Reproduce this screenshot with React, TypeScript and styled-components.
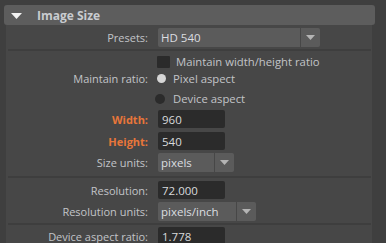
import React from "react";
import styled, { createGlobalStyle } from "styled-components";

const Global = createGlobalStyle`
  html, body { margin: 0; padding: 0; background: #3f3f3f; }
  body { font-family: "Open Sans", "Liberation Sans", sans-serif; }
`;

const Root = styled.div`
  width: 386px;
  height: 243px;
  overflow: hidden;
  background: #3f3f3f;
  padding-top: 5px;
  box-sizing: border-box;
`;

const Header = styled.div`
  margin-left: 4px;
  width: 371px;
  height: 20px;
  background: #5d5d5d;
  border-radius: 3px;
  display: flex;
  align-items: center;
  box-sizing: border-box;
  padding-left: 7px;
`;

const Caret = styled.svg`
  width: 11px;
  height: 6px;
  margin-right: 15px;
  margin-top: 1px;
`;

const HeaderTitle = styled.span`
  font-size: 12px;
  font-weight: 700;
  color: #c9ccd0;
`;

const Panel = styled.div`
  margin-left: 6px;
  width: 366px;
  height: 240px;
  background: #474747;
  display: flex;
  flex-direction: column;
`;

const Separator = styled.div<{ $mt: number }>`
  margin-top: ${(p) => p.$mt}px;
  margin-left: 2px;
  width: 363px;
  height: 2px;
  background: #3e3e3e;
  flex-shrink: 0;
`;

const Row = styled.div<{ $mt: number; $h: number }>`
  margin-top: ${(p) => p.$mt}px;
  height: ${(p) => p.$h}px;
  display: grid;
  grid-template-columns: 142px auto;
  column-gap: 10px;
  align-items: center;
  flex-shrink: 0;
`;

const Label = styled.span<{ $accent?: boolean }>`
  text-align: right;
  font-size: 11px;
  font-weight: ${(p) => (p.$accent ? 700 : 400)};
  color: ${(p) => (p.$accent ? "#e8763a" : "#c2c4c7")};
  white-space: nowrap;
`;

const Field = styled.div`
  width: 67px;
  height: 18px;
  background: #2b2b2b;
  border-radius: 2px;
  box-sizing: border-box;
  padding-left: 4px;
  display: flex;
  align-items: center;
  font-size: 11.5px;
  color: #d8dadc;
`;

const Dropdown = styled.div`
  display: flex;
  gap: 1px;
  height: 19px;
`;

const DropMain = styled.div<{ $w: number }>`
  width: ${(p) => p.$w}px;
  height: 100%;
  background: #5b5b5b;
  border-radius: 2px 0 0 2px;
  box-sizing: border-box;
  padding-left: 3px;
  display: flex;
  align-items: center;
  font-size: 11.5px;
  color: #dcdee0;
`;

const DropArrow = styled.div`
  width: 19px;
  height: 100%;
  background: #5b5b5b;
  border-radius: 0 2px 2px 0;
  display: flex;
  align-items: center;
  justify-content: center;
`;

const Choice = styled.div`
  display: flex;
  align-items: center;
  font-size: 11.3px;
  color: #c2c4c7;
  white-space: nowrap;
`;

const CheckBox = styled.div`
  width: 13px;
  height: 12px;
  background: #2b2b2b;
  border-radius: 1px;
  margin-left: -1px;
  margin-right: 6px;
`;

const Radio = styled.div<{ $on?: boolean }>`
  width: ${(p) => (p.$on ? 9 : 10)}px;
  height: ${(p) => (p.$on ? 9 : 10)}px;
  border-radius: 50%;
  background: ${(p) => (p.$on ? "#d6d6d6" : "#2b2b2b")};
  margin-left: ${(p) => (p.$on ? -1 : -3)}px;
  margin-right: ${(p) => (p.$on ? 7 : 8)}px;
`;

const Tri = () => (
  <svg width="9" height="5" viewBox="0 0 9 5">
    <polygon points="0,0 9,0 4.5,5" fill="#b4b4b4" />
  </svg>
);

const Select = ({ w, value }: { w: number; value: string }) => (
  <Dropdown>
    <DropMain $w={w}>{value}</DropMain>
    <DropArrow>
      <Tri />
    </DropArrow>
  </Dropdown>
);

export default function App() {
  return (
    <Root>
      <Global />
      <Header>
        <Caret viewBox="0 0 11 6">
          <polygon points="0,0 11,0 5.5,6" fill="#f2f2f2" />
        </Caret>
        <HeaderTitle>Image Size</HeaderTitle>
      </Header>
      <Panel>
        <Row $mt={3} $h={19}>
          <Label>Presets:</Label>
          <Select w={142} value="HD 540" />
        </Row>
        <Separator $mt={2} />
        <Row $mt={3} $h={13}>
          <span />
          <Choice>
            <CheckBox />
            Maintain width/height ratio
          </Choice>
        </Row>
        <Row $mt={4} $h={14}>
          <Label>Maintain ratio:</Label>
          <Choice>
            <Radio $on />
            Pixel aspect
          </Choice>
        </Row>
        <Row $mt={6} $h={14}>
          <span />
          <Choice>
            <Radio />
            Device aspect
          </Choice>
        </Row>
        <Row $mt={5} $h={18}>
          <Label $accent>Width:</Label>
          <Field>960</Field>
        </Row>
        <Row $mt={4} $h={18}>
          <Label $accent>Height:</Label>
          <Field>540</Field>
        </Row>
        <Row $mt={3} $h={19}>
          <Label>Size units:</Label>
          <Select w={56} value="pixels" />
        </Row>
        <Separator $mt={4} />
        <Row $mt={3} $h={18}>
          <Label>Resolution:</Label>
          <Field>72.000</Field>
        </Row>
        <Row $mt={3} $h={19}>
          <Label>Resolution units:</Label>
          <Select w={78} value="pixels/inch" />
        </Row>
        <Separator $mt={2} />
        <Row $mt={2} $h={18}>
          <Label>Device aspect ratio:</Label>
          <Field>1.778</Field>
        </Row>
      </Panel>
    </Root>
  );
}
